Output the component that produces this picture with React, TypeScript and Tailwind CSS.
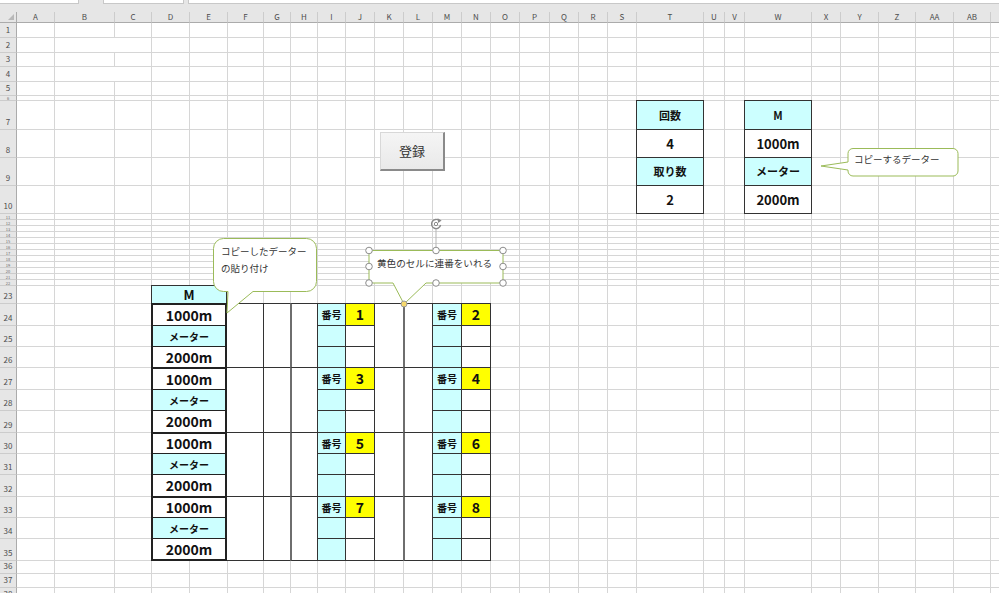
import React from "react";

const COLS = ["A","B","C","D","E","F","G","H","I","J","K","L","M","N","O","P","Q","R","S","T","U","V","W","X","Y","Z","AA","AB","AC"];
const ROWS = Array.from({ length: 38 }, (_, i) => i + 1);

// same track sizes for the gridline layer and the content layer
const SHEET =
  "grid grid-cols-[17px_37px_60px_37px_38px_38px_36px_27px_27px_28px_29px_29px_29px_29px_29px_29px_30px_29px_29px_29px_67px_21px_20px_67px_29px_38px_37px_38px_37px_1fr] grid-rows-[11px_14px_15px_14px_15px_14px_5px_29px_28px_28px_28px_repeat(12,6px)_18px_22px_21px_21px_22px_21px_22px_21px_21px_22px_21px_21px_22px_13px_14px_14px]";

// rows 24..35
const R = [
  "row-start-25", "row-start-26", "row-start-27", "row-start-28",
  "row-start-29", "row-start-30", "row-start-31", "row-start-32",
  "row-start-33", "row-start-34", "row-start-35", "row-start-36",
];
// rows 7..10
const R2 = ["row-start-8", "row-start-9", "row-start-10", "row-start-11"];

function cellClass(r: number, c: string) {
  const noLeft = c === "A" || (c === "C" && (r === 2 || r === 4));
  if (r === 1) return noLeft ? "border-[#d6d6d6]" : "border-l border-[#d6d6d6]";
  return noLeft ? "border-t border-[#d6d6d6]" : "border-l border-t border-[#d6d6d6]";
}

function rowHeadClass(r: number) {
  if (r === 1)
    return "flex items-end justify-center overflow-hidden pb-[3px] bg-[#e6e6e6] border-r border-r-[#ababab] text-[8px] leading-none text-[#4d4d4d]";
  if (r === 6 || (r >= 11 && r <= 22))
    return "flex items-center justify-center overflow-hidden bg-[#e6e6e6] border-r border-r-[#ababab] border-t border-t-[#cccccc] text-[4px] leading-none text-[#6a6a6a]";
  return "flex items-end justify-center overflow-hidden pb-[3px] bg-[#e6e6e6] border-r border-r-[#ababab] border-t border-t-[#cccccc] text-[8px] leading-none text-[#4d4d4d]";
}

function Gridlines() {
  return (
    <div className={"col-start-1 row-start-1 " + SHEET}>
      <div className="relative bg-[#e6e6e6] border-r border-b border-[#ababab]">
        <svg className="absolute right-[2px] bottom-[2px]" width="6" height="6">
          <polygon points="6,0 6,6 0,6" fill="#b8b8b8" />
        </svg>
      </div>
      {COLS.map((c) => (
        <div
          key={c}
          className={
            c === "A"
              ? "flex items-center justify-center bg-[#e6e6e6] border-b border-b-[#ababab] text-[8px] leading-none text-[#4d4d4d]"
              : "flex items-center justify-center bg-[#e6e6e6] border-l border-l-[#cccccc] border-b border-b-[#ababab] text-[8px] leading-none text-[#4d4d4d]"
          }
        >
          {c === "AC" ? "" : c}
        </div>
      ))}
      {ROWS.map((r) => (
        <React.Fragment key={r}>
          <div className={rowHeadClass(r)}>{r}</div>
          {COLS.map((c) => (
            <div key={c} className={cellClass(r, c)} />
          ))}
        </React.Fragment>
      ))}
    </div>
  );
}

const SPAN_COLS: [string, string][] = [
  ["F", "col-start-7 border-[#333]"],
  ["G", "col-start-8 border-l border-[#333]"],
  ["H", "col-start-9 border-l-2 border-[#333] border-l-[#6e6e6e]"],
  ["K", "col-start-12 border-l border-[#333]"],
  ["L", "col-start-13 border-l-2 border-[#333] border-l-[#6e6e6e]"],
];

const TOP_T: [string, boolean][] = [["回数", true], ["4", false], ["取り数", true], ["2", false]];
const TOP_W: [string, boolean][] = [["M", true], ["1000m", false], ["メーター", true], ["2000m", false]];

function Content() {
  const cells: React.ReactNode[] = [];

  cells.push(
    <div
      key="mh"
      className="col-start-5 col-span-2 row-start-24 flex items-center justify-center border-x border-t border-[#333] bg-[#ccffff] text-[13px] font-bold"
    >
      M
    </div>
  );

  for (let i = 0; i < 12; i++) {
    const k = i % 3;
    const label = k === 0 ? "1000m" : k === 1 ? "メーター" : "2000m";
    cells.push(
      <div
        key={"l" + i}
        className={`col-start-5 col-span-2 ${R[i]} flex items-center justify-center border-x-2 border-[#222] font-bold ${
          k === 0 ? "border-t-2" : "border-t"
        } ${i === 11 ? "border-b-2 -mb-px" : ""} ${
          k === 1 ? "bg-[#ccffff] text-[10px]" : "bg-white text-[14px]"
        }`}
      >
        {label}
      </div>
    );
  }

  for (let g = 0; g < 4; g++) {
    const last = g === 3;
    for (const [col, cls] of SPAN_COLS) {
      cells.push(
        <div
          key={"s" + g + col}
          className={`${R[g * 3]} row-span-3 ${cls} border-t bg-white ${last ? "border-b -mb-px" : ""}`}
        />
      );
    }
    for (let k = 0; k < 3; k++) {
      const row = R[g * 3 + k];
      const bottom = last && k === 2 ? "border-b -mb-px" : "";
      cells.push(
        <div
          key={"i" + g + k}
          className={`col-start-10 ${row} flex items-center justify-center border-l border-t border-[#333] bg-[#ccffff] text-[10px] font-bold ${bottom}`}
        >
          {k === 0 ? "番号" : ""}
        </div>
      );
      cells.push(
        <div
          key={"j" + g + k}
          className={`col-start-11 ${row} flex items-center justify-center border-l border-t border-[#333] text-[14px] font-bold ${
            k === 0 ? "bg-[#ffff00]" : "bg-white"
          } ${bottom}`}
        >
          {k === 0 ? g * 2 + 1 : ""}
        </div>
      );
      cells.push(
        <div
          key={"m" + g + k}
          className={`col-start-14 ${row} flex items-center justify-center border-l border-t border-[#333] bg-[#ccffff] text-[10px] font-bold ${bottom}`}
        >
          {k === 0 ? "番号" : ""}
        </div>
      );
      cells.push(
        <div
          key={"n" + g + k}
          className={`col-start-15 ${row} flex items-center justify-center border-l border-t border-r -mr-px border-[#333] text-[14px] font-bold ${
            k === 0 ? "bg-[#ffff00]" : "bg-white"
          } ${bottom}`}
        >
          {k === 0 ? g * 2 + 2 : ""}
        </div>
      );
    }
  }

  TOP_T.forEach(([t, cyan], i) => {
    cells.push(
      <div
        key={"t" + i}
        className={`col-start-21 ${R2[i]} flex items-center justify-center border-l border-t border-r -mr-px border-[#333] font-bold ${
          i === 3 ? "border-b -mb-px" : ""
        } ${cyan ? "bg-[#ccffff] text-[11px]" : "bg-white text-[13px]"}`}
      >
        {t}
      </div>
    );
  });
  TOP_W.forEach(([t, cyan], i) => {
    cells.push(
      <div
        key={"w" + i}
        className={`col-start-24 ${R2[i]} flex items-center justify-center border-l border-t border-r -mr-px border-[#333] font-bold ${
          i === 3 ? "border-b -mb-px" : ""
        } ${cyan ? "bg-[#ccffff] text-[11px]" : "bg-white text-[13px]"}`}
      >
        {t}
      </div>
    );
  });

  return <div className={"col-start-1 row-start-1 " + SHEET}>{cells}</div>;
}

function Handle({ x, y }: { x: number; y: number }) {
  return <circle cx={x} cy={y} r="3.3" fill="#fff" stroke="#8c8c8c" strokeWidth="1" />;
}

export default function App() {
  return (
    <div className="relative w-[999px] h-[593px] overflow-hidden bg-white text-[#111] font-['Noto_Sans_CJK_JP','Noto_Sans',sans-serif]">
      <div className="flex h-[12px] items-start bg-[#e6e6e6]">
        <div className="h-[4px] w-[79px] bg-white border-r border-b border-[#c8c8c8]" />
        <div className="ml-[24px] h-[4px] w-[81px] bg-white border-x border-b border-[#c8c8c8]" />
        <div className="ml-[4px] h-[4px] flex-1 bg-white border-l border-b border-[#c8c8c8]" />
      </div>

      <div className="grid grid-cols-1">
        <Gridlines />
        <Content />
      </div>

      {/* button */}
      <div className="absolute left-[380px] top-[132px] flex h-[39px] w-[65px] items-center justify-center bg-linear-to-b from-[#f5f5f5] to-[#e9e9e9] border-t border-l border-[#d8d8d8] border-r-2 border-b-2 border-r-[#8a8a8a] border-b-[#8a8a8a] text-[13px] text-[#333]">
        登録
      </div>

      {/* callout: paste */}
      <div className="absolute left-[213px] top-[238px] h-[76px] w-[105px]">
        <svg width="105" height="76" className="absolute inset-0">
          <path
            d="M10.5,0.5 H93.5 A10,10 0 0 1 103.5,10.5 V43.5 A10,10 0 0 1 93.5,53.5 H40 L14,75 L15,53.5 H10.5 A10,10 0 0 1 0.5,43.5 V10.5 A10,10 0 0 1 10.5,0.5 Z"
            fill="#fff"
            stroke="#9bbb59"
          />
        </svg>
        <div className="relative pl-[8px] pt-[5px] text-[9.5px] leading-[16.5px] text-[#333]">
          コピーしたデーター
          <br />
          の貼り付け
        </div>
      </div>

      {/* callout: selected */}
      <div className="absolute left-[362px] top-[216px] h-[94px] w-[148px]">
        <svg width="148" height="94" className="absolute inset-0">
          <path
            d="M11,34.5 H137 A4,4 0 0 1 141,38.5 V63 A4,4 0 0 1 137,67 H64 L42,88 L31,67 H11 A4,4 0 0 1 7,63 V38.5 A4,4 0 0 1 11,34.5 Z"
            fill="#fff"
            stroke="#9bbb59"
          />
          <line x1="74" y1="13" x2="74" y2="31" stroke="#b5b5b5" />
          <path d="M77.2,4.6 A4.6,4.6 0 1 0 78.6,9" fill="none" stroke="#8a8a8a" strokeWidth="1.4" />
          <path d="M75.6,2.2 L79.6,4.4 L76.2,7 Z" fill="#8a8a8a" />
          <circle cx="74" cy="8" r="1.7" fill="none" stroke="#8a8a8a" strokeWidth="1" />
          <Handle x={7} y={34.5} />
          <Handle x={74} y={34.5} />
          <Handle x={141} y={34.5} />
          <Handle x={7} y={50.5} />
          <Handle x={141} y={50.5} />
          <Handle x={7} y={67} />
          <Handle x={74} y={67} />
          <Handle x={141} y={67} />
          <circle cx="42" cy="88" r="3" fill="#f6d96e" stroke="#9a9a9a" />
        </svg>
        <div className="absolute left-[15px] top-[40px] whitespace-nowrap text-[9.6px] leading-[14px] text-[#333]">
          黄色のセルに連番をいれる
        </div>
      </div>

      {/* callout: copy source */}
      <div className="absolute left-[820px] top-[147px] h-[31px] w-[140px]">
        <svg width="140" height="31" className="absolute inset-0">
          <path
            d="M33,1.5 H133 A5,5 0 0 1 138,6.5 V24 A5,5 0 0 1 133,29 H33 A5,5 0 0 1 28,24 V23 L1,19 L28,15 V6.5 A5,5 0 0 1 33,1.5 Z"
            fill="#fff"
            stroke="#9bbb59"
          />
        </svg>
        <div className="absolute left-[34px] top-[5px] whitespace-nowrap text-[9.5px] leading-[14px] text-[#333]">
          コピーするデーター
        </div>
      </div>
    </div>
  );
}
